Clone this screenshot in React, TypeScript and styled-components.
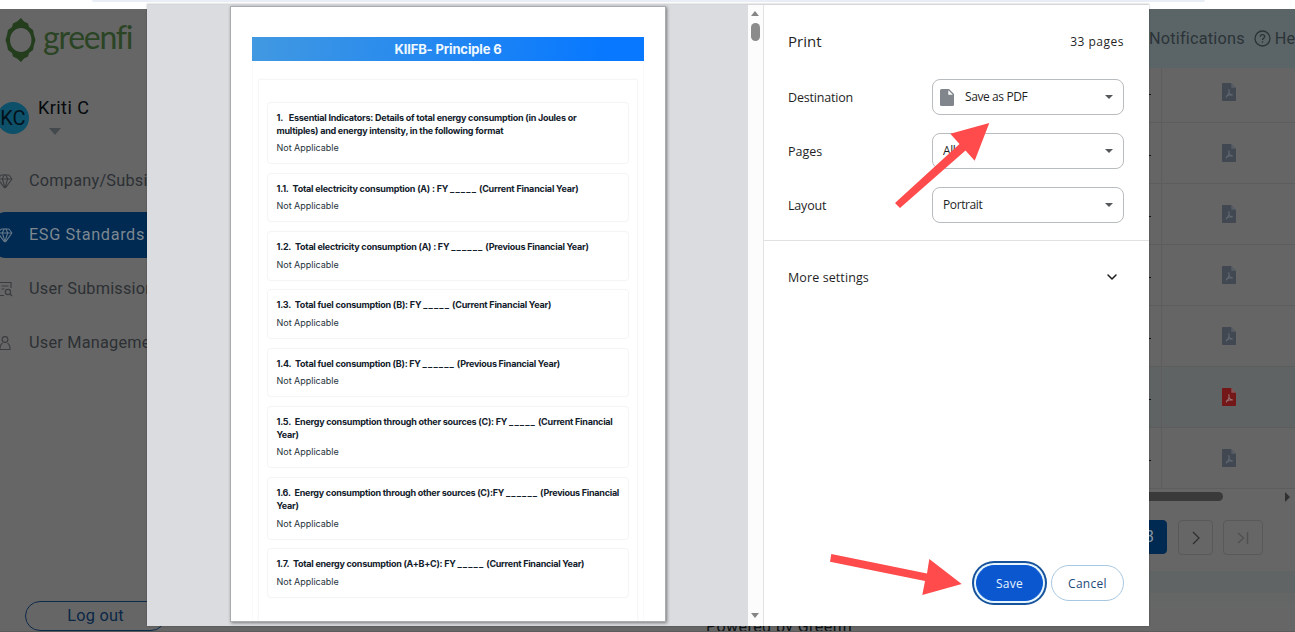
import React from 'react';
import styled, { createGlobalStyle } from 'styled-components';
import { Gem, ChevronDown } from 'lucide-react';

const Global = createGlobalStyle`
  * { box-sizing: border-box; }
  html, body { margin: 0; padding: 0; overflow: hidden; background: #666; }
`;

const Screen = styled.div`
  position: relative;
  width: 1295px;
  height: 632px;
  overflow: hidden;
  display: flex;
  flex-direction: column;
  background: #666;
  font-family: Roboto, sans-serif;
  white-space: nowrap;
`;

const BrowserEdge = styled.header`
  flex: none;
  height: 9px;
  padding: 0 90px 0 92px;
  background: #fff;
`;
const AddressBar = styled.div`
  height: 2px;
  border-radius: 0 0 12px 12px;
  background: #e9edf6;
`;

const Backdrop = styled.div`
  flex: 1;
  min-height: 0;
  display: flex;
  border-bottom: 1px solid #5b5b5b;
`;

const Sidebar = styled.aside`
  flex: none;
  width: 240px;
  height: 622px;
  display: flex;
  flex-direction: column;
`;
const Brand = styled.div`
  display: flex;
  align-items: center;
  height: 62px;
  padding-left: 5px;
  gap: 7px;
`;
const BrandName = styled.span`
  font: 400 32px/40px Lato, sans-serif;
  letter-spacing: -1.25px;
  color: #2a4424;
  margin-top: -7px;
`;
const Profile = styled.div`
  display: flex;
  height: 81px;
  padding-top: 22px;
`;
const Avatar = styled.div`
  width: 32px;
  height: 32px;
  margin: 9px 0 0 -3px;
  border-radius: 50%;
  background: #0d506a;
  color: #03121a;
  font-size: 20px;
  line-height: 32px;
  text-align: center;
`;
const ProfileName = styled.div`
  display: flex;
  flex-direction: column;
  margin-left: 9px;
  padding-top: 4px;
  font-size: 18px;
  line-height: 22px;
  letter-spacing: 0.45px;
  color: #050a0d;
`;
const ProfileCaret = styled.i`
  margin: 9px 0 0 11px;
  width: 0;
  border: 6.5px solid transparent;
  border-top: 7px solid #44494d;
  border-bottom: 0;
`;
const Nav = styled.nav`
  display: flex;
  flex-direction: column;
  gap: 8px;
  padding-top: 6px;
`;
const NavItem = styled.a<{ $active?: boolean }>`
  display: flex;
  align-items: center;
  height: 46px;
  margin-left: -8px;
  padding: 0 0 1px 5px;
  gap: 16px;
  border-radius: 14px;
  background: ${p => (p.$active ? '#002a52' : 'transparent')};
  color: ${p => (p.$active ? '#7d8790' : '#2c3034')};
  font-size: 16.3px;
  letter-spacing: ${p => (p.$active ? '0.62px' : '0.22px')};
  svg { flex: none; color: ${p => (p.$active ? '#66798a' : '#3a3d40')}; }
`;
const LogOut = styled.button`
  margin: auto 0 0 25px;
  width: 141px;
  height: 30px;
  flex: none;
  border: 1px solid #0c2a4a;
  border-radius: 15px;
  background: transparent;
  color: #0a2746;
  font: 400 16.3px/26px Roboto, sans-serif;
  letter-spacing: 0.25px;
`;

const Main = styled.main`
  flex: 1;
  min-width: 0;
  display: flex;
  flex-direction: column;
`;
const TopBar = styled.div`
  height: 59px;
  flex: none;
  display: flex;
  align-items: center;
  padding-left: 909px;
  background: #5b6568;
  color: #2b3337;
  font: 16.3px/20px Roboto, sans-serif;
  letter-spacing: 0.2px;
  svg { flex: none; margin: 0 4px 0 9px; }
`;
const Rows = styled.div`
  flex: none;
  height: 420px;
`;
const TableRow = styled.div<{ $first?: boolean; $selected?: boolean }>`
  display: flex;
  height: ${p => (p.$first ? 55 : 61)}px;
  padding-left: 909px;
  border-bottom: 1px solid #5d5d5d;
  background: ${p => (p.$selected ? '#5f6363' : '#656565')};
`;
const ValueCell = styled.div`
  width: 13px;
  padding-bottom: 27px;
  display: flex;
  align-items: flex-end;
  border-right: 1px solid #5d5d5d;
`;
const Dash = styled.i`
  width: 2px;
  height: 1px;
  background: #111;
`;
const FileCell = styled.div`
  display: flex;
  align-items: flex-end;
  padding: 0 0 21px 60px;
`;
const HorizontalScroll = styled.div`
  flex: none;
  display: flex;
  align-items: center;
  height: 17px;
  padding-right: 5px;
  justify-content: space-between;
`;
const ScrollThumbH = styled.div`
  width: 983px;
  height: 9px;
  border-radius: 5px;
  background: #3a3a3a;
`;
const ScrollRight = styled.i`
  border: 5px solid transparent;
  border-left: 5px solid #303030;
  border-right: 0;
`;
const Pager = styled.div`
  flex: none;
  display: flex;
  height: 66px;
  padding: 15px 0 0 892px;
`;
const PageButton = styled.button<{ $width: number; $current?: boolean; $gap?: number }>`
  display: flex;
  align-items: center;
  justify-content: center;
  width: ${p => p.$width}px;
  height: ${p => (p.$current ? 34 : 35)}px;
  margin-left: ${p => p.$gap ?? 0}px;
  padding: 0;
  border: 1px solid ${p => (p.$current ? '#002a52' : '#595959')};
  border-radius: 4px;
  background: ${p => (p.$current ? '#002a52' : 'transparent')};
  color: ${p => (p.$current ? '#8796a4' : '#2e2e2e')};
  font: 16px/20px Roboto, sans-serif;
`;
const Footer = styled.footer`
  flex: 1;
  padding: 46px 0 0 466px;
  background: linear-gradient(#606464 0 22px, #646666 22px 26px, #666 44px);
  color: #0c1114;
  font: 16px/20px Roboto, sans-serif;
  letter-spacing: 0.45px;
  overflow: hidden;
`;

/* Print dialog */
const Dialog = styled.section`
  position: absolute;
  left: 147px;
  top: 4px;
  width: 1002px;
  height: 622px;
  display: flex;
  background: #fff;
  border-top: 1px solid #d5d8da;
  box-shadow: 0 0 2px rgba(0, 0, 0, 0.25);
`;
const Preview = styled.div`
  width: 601px;
  padding: 2px 0 4px 84px;
  background: #dadce0;
`;
const Paper = styled.article`
  width: 434px;
  height: 614px;
  padding: 30px 21px 0;
  overflow: hidden;
  background: #fff;
  box-shadow: 0 0 0 1px #aaabad, 1px 1px 3px 1px rgba(0, 0, 0, 0.45);
  font-family: Inter, sans-serif;
`;
const ReportFrame = styled.div`
  height: 584px;
  border: 1px solid #f9fafb;
  border-width: 0 1px;
`;
const ReportTitle = styled.h1`
  margin: 0 -1px;
  height: 24px;
  background: linear-gradient(100deg, #4299e1, #0778ff 90%);
  color: #f0f8ff;
  font: 700 13px/24px Inter, sans-serif;
  letter-spacing: -0.14px;
  text-align: center;
`;
const Questions = styled.div`
  display: flex;
  flex-direction: column;
  gap: 8.75px;
  height: 560px;
  margin: 18px 5px 0;
  padding: 21.6px 8px 0;
  border: 1px solid #f4f6f7;
  border-radius: 2px 2px 0 0;
  box-shadow: 0 0 2px rgba(0, 0, 0, 0.06);
`;
const Question = styled.section`
  flex: none;
  padding: 8px 8px 8px 8.5px;
  border: 1px solid #f3f5f6;
  border-radius: 4px;
  box-shadow: 0 0 1px rgba(0, 0, 0, 0.04);
`;
const QuestionText = styled.h2<{ $tracking: number }>`
  margin: 0;
  color: #12202b;
  font: 700 9px/13px Inter, sans-serif;
  letter-spacing: ${p => p.$tracking}px;
`;
const Blank = styled.span`
  letter-spacing: 1.1px;
`;
const Answer = styled.p`
  margin: 4.5px 0 0;
  color: #26323c;
  font: 400 9px/14px Inter, sans-serif;
  letter-spacing: -0.02px;
`;

const ScrollBar = styled.div`
  width: 16px;
  display: flex;
  flex-direction: column;
  align-items: center;
  justify-content: space-between;
  padding: 6px 1px 8px 0;
  background: #fcfcfc;
  border-right: 1px solid #e3e3e3;
`;
const ScrollTop = styled.div`
  display: flex;
  flex-direction: column;
  align-items: center;
  gap: 7px;
`;
const ScrollArrow = styled.i<{ $down?: boolean }>`
  width: 0;
  border: 4.5px solid transparent;
  ${p => (p.$down ? 'border-top: 5px solid #858585; border-bottom: 0;' : 'border-bottom: 5px solid #858585; border-top: 0;')}
`;
const ScrollThumb = styled.div`
  width: 9px;
  height: 18px;
  border-radius: 5px;
  background: #8b8b8b;
`;

const Panel = styled.div`
  flex: 1;
  display: flex;
  flex-direction: column;
  color: #1f1f1f;
  font: 13px/20px 'Open Sans', sans-serif;
`;
const PanelHeader = styled.div`
  display: flex;
  justify-content: space-between;
  align-items: center;
  height: 65px;
  padding: 9px 25px 0 24px;
`;
const PanelTitle = styled.span`
  margin-top: -2px;
  font-size: 15px;
`;
const PageCount = styled.span`
  font-size: 12px;
  letter-spacing: 0.5px;
`;
const Setting = styled.label`
  display: flex;
  justify-content: space-between;
  align-items: center;
  height: 54px;
  padding: 0 25px 0 24px;
`;
const SettingName = styled.span<{ $tracking: number }>`
  padding-top: 2px;
  font-size: 12.5px;
  letter-spacing: ${p => p.$tracking}px;
`;
const SelectBox = styled.span`
  display: flex;
  align-items: center;
  width: 192px;
  height: 36px;
  padding: 0 10px;
  border: 1px solid #b9bcbe;
  border-radius: 8px;
  font-size: 12px;
  letter-spacing: -0.4px;
  svg { margin: 0 10px 0 -3px; }
  svg + span { margin-left: 1px; }
`;
const SelectCaret = styled.i`
  margin-left: auto;
  border: 4px solid transparent;
  border-top: 4.5px solid #55595c;
  border-bottom: 0;
`;
const MoreSettings = styled.div`
  display: flex;
  align-items: center;
  justify-content: space-between;
  height: 73px;
  margin-top: 8px;
  padding: 0 29px 0 24px;
  border-top: 1px solid #dfe1e3;
`;
const Actions = styled.div`
  display: flex;
  justify-content: flex-end;
  gap: 8px;
  margin-top: auto;
  padding: 0 25px 25px;
`;
const ActionButton = styled.button<{ $primary?: boolean }>`
  width: ${p => (p.$primary ? 67 : 73)}px;
  height: 36px;
  padding: 2px 0 0;
  border: 1px solid ${p => (p.$primary ? '#0b57d0' : '#a8c7e0')};
  border-radius: 18px;
  background: ${p => (p.$primary ? '#0b57d0' : '#fff')};
  box-shadow: ${p => (p.$primary ? '0 0 0 2px #e6f6ff, 0 0 0 4px #16529b' : 'none')};
  color: ${p => (p.$primary ? '#e6f4ff' : '#1c4a78')};
  font: 12px/20px 'Open Sans', sans-serif;
  letter-spacing: 0.3px;
`;

const Annotations = styled.svg`
  position: absolute;
  inset: 0;
  pointer-events: none;
`;

const PdfIcon = ({ red }: { red?: boolean }) => (
  <svg width="14" height="18" viewBox="0 0 14 18">
    <path d="M0 .8Q0 0 .8 0H9l5 5v12.200q0 .8-.8.8H.8Q0 18 0 17.200Z" fill={red ? '#741719' : '#414852'} />
    <path d="M9.300 0 14 4.700H9.300Z" fill={red ? '#8a5557' : '#585e66'} />
    <path d="M6.600 6.200q1 1.500.2 4Q5.500 13 3.900 14.300M6.800 9.500q1.400 2.600 4 2.500M4 13.200q2.800-1.600 6.500-1.500" fill="none" stroke={red ? '#987476' : '#616870'} strokeWidth="1.1" />
  </svg>
);

const Logo = () => (
  <svg width="31" height="44" viewBox="0 0 31 44">
    <path fillRule="evenodd" fill="#233d1d" d="M16 0 19 3.500 23 5.500 24 9 28 12 29 17 30.500 22 29 27 28 32 24 35 23 38.500 19 40.500 16 44 12 40.500 8 38.500 7 35 3 32 2 27 .5 22 2 17 3 12 7 9 8 5.500 12 3.500ZM16 10C10 10 5 15.400 5 22s5 12 11 12 10.500-5.400 10.500-12S22 10 16 10Z" />
  </svg>
);

const SubmissionIcon = () => (
  <svg width="16" height="16" viewBox="0 0 16 16" fill="none" stroke="currentColor" strokeWidth="1.200">
    <path d="M14 7V1.500H2v13h5M4.500 5h7M4.500 8h3M1 14.500h6" />
    <circle cx="11" cy="11" r="2.600" />
    <path d="m13 13 2 2" />
  </svg>
);

const PersonIcon = () => (
  <svg width="16" height="16" viewBox="0 0 16 16" fill="none" stroke="currentColor" strokeWidth="1.100">
    <circle cx="8" cy="4.500" r="2.900" />
    <path d="M5.500 8.300Q2.900 9.800 2.900 14.500h10.200q0-4.700-2.600-6.200" />
  </svg>
);

const HelpIcon = () => (
  <svg width="17" height="17" viewBox="0 0 17 17" fill="none" stroke="currentColor" strokeWidth="1.300">
    <circle cx="8.500" cy="8.500" r="7.500" />
    <path d="M6.300 6.800q.1-2.100 2.200-2.100t2.200 1.900q0 1.100-1.200 1.800-1 .6-1 1.600M8.500 11.300v1.500" />
  </svg>
);

const DocumentIcon = () => (
  <svg width="14" height="17" viewBox="0 0 14 17">
    <path d="M1.500 0H9l5 5v10.500q0 1.500-1.500 1.500h-11Q0 17 0 15.500v-14Q0 0 1.500 0Z" fill="#80868b" />
    <path d="M8.300 1.200v4.500h4.500Z" fill="#fff" />
  </svg>
);

type Item = { no: string; tracking: number; lines: React.ReactNode[] };
const questions: Item[] = [
  { no: '1.\u00a0\u00a0\u00a0', tracking: -0.23, lines: ['Essential Indicators: Details of total energy consumption (in Joules or', 'multiples) and energy intensity, in the following format'] },
  { no: '1.1.\u00a0\u00a0', tracking: -0.2, lines: [<>Total electricity consumption (A) : FY <Blank>_____</Blank> (Current Financial Year)</>] },
  { no: '1.2.\u00a0\u00a0', tracking: -0.235, lines: [<>Total electricity consumption (A) : FY <Blank>______</Blank> (Previous Financial Year)</>] },
  { no: '1.3.\u00a0\u00a0', tracking: -0.215, lines: [<>Total fuel consumption (B): FY <Blank>_____</Blank> (Current Financial Year)</>] },
  { no: '1.4.\u00a0\u00a0', tracking: -0.24, lines: [<>Total fuel consumption (B): FY <Blank>______</Blank> (Previous Financial Year)</>] },
  { no: '1.5.\u00a0\u00a0', tracking: -0.23, lines: [<>Energy consumption through other sources (C): FY <Blank>_____</Blank> (Current Financial</>, 'Year)'] },
  { no: '1.6.\u00a0\u00a0', tracking: -0.25, lines: [<>Energy consumption through other sources (C):FY <Blank>______</Blank> (Previous Financial</>, 'Year)'] },
  { no: '1.7.\u00a0\u00a0', tracking: -0.26, lines: [<>Total energy consumption (A+B+C): FY <Blank>_____</Blank> (Current Financial Year)</>] },
];

export default function App() {
  return (
    <Screen>
      <Global />
      <BrowserEdge><AddressBar /></BrowserEdge>
      <Backdrop>
        <Sidebar>
          <Brand><Logo /><BrandName>greenfi</BrandName></Brand>
          <Profile>
            <Avatar>KC</Avatar>
            <ProfileName>Kriti C<ProfileCaret /></ProfileName>
          </Profile>
          <Nav>
            <NavItem><Gem size={16} strokeWidth={1.6} />Company/Subsidiary</NavItem>
            <NavItem $active><Gem size={16} strokeWidth={1.6} />ESG Standards</NavItem>
            <NavItem><SubmissionIcon />User Submissions</NavItem>
            <NavItem><PersonIcon />User Management</NavItem>
          </Nav>
          <LogOut>Log out</LogOut>
        </Sidebar>
        <Main>
          <TopBar>Notifications<HelpIcon />Help</TopBar>
          <Rows>
            {[0, 1, 2, 3, 4, 5, 6].map(i => (
              <TableRow key={i} $first={i === 0} $selected={i === 5}>
                <ValueCell><Dash /></ValueCell>
                <FileCell><PdfIcon red={i === 5} /></FileCell>
              </TableRow>
            ))}
          </Rows>
          <HorizontalScroll><ScrollThumbH /><ScrollRight /></HorizontalScroll>
          <Pager>
            <PageButton $width={35} $current>3</PageButton>
            <PageButton $width={35} $gap={11}>
              <svg width="10" height="14" fill="none" stroke="currentColor" strokeWidth="1.2"><path d="m2 1 6 6-6 6" /></svg>
            </PageButton>
            <PageButton $width={40} $gap={10}>
              <svg width="12" height="12" fill="none" stroke="#505050" strokeWidth="1.4"><path d="m1 1 5.500 5L1 11M10.500 0v12" /></svg>
            </PageButton>
          </Pager>
          <Footer>Powered by Greenfi</Footer>
        </Main>
      </Backdrop>

      <Dialog>
        <Preview>
          <Paper>
            <ReportFrame>
              <ReportTitle>KIIFB- Principle 6</ReportTitle>
              <Questions>
                {questions.map(q => (
                  <Question key={q.no}>
                    <QuestionText $tracking={q.tracking}>
                      {q.no}{q.lines[0]}
                      {q.lines[1] && <><br />{q.lines[1]}</>}
                    </QuestionText>
                    <Answer>Not Applicable</Answer>
                  </Question>
                ))}
              </Questions>
            </ReportFrame>
          </Paper>
        </Preview>
        <ScrollBar>
          <ScrollTop><ScrollArrow /><ScrollThumb /></ScrollTop>
          <ScrollArrow $down />
        </ScrollBar>
        <Panel>
          <PanelHeader><PanelTitle>Print</PanelTitle><PageCount>33 pages</PageCount></PanelHeader>
          <Setting>
            <SettingName $tracking={-0.18}>Destination</SettingName>
            <SelectBox><DocumentIcon /><span>Save as PDF</span><SelectCaret /></SelectBox>
          </Setting>
          <Setting>
            <SettingName $tracking={0}>Pages</SettingName>
            <SelectBox>All<SelectCaret /></SelectBox>
          </Setting>
          <Setting>
            <SettingName $tracking={-0.2}>Layout</SettingName>
            <SelectBox>Portrait<SelectCaret /></SelectBox>
          </Setting>
          <MoreSettings>
            <SettingName $tracking={0.1}>More settings</SettingName>
            <ChevronDown size={16} strokeWidth={2.3} />
          </MoreSettings>
          <Actions>
            <ActionButton $primary>Save</ActionButton>
            <ActionButton>Cancel</ActionButton>
          </Actions>
        </Panel>
      </Dialog>

      <Annotations width="1295" height="632" fill="#ff4b4b">
        <path d="M895 203 959.500 144 950.300 133.700 989.300 123 974.700 160.700 965.500 150.500 900 208Z" />
        <path d="M831.300 554 927 573.500 929.300 559 961.700 584 922.300 595 925 581 830 561.700Z" />
      </Annotations>
    </Screen>
  );
}
